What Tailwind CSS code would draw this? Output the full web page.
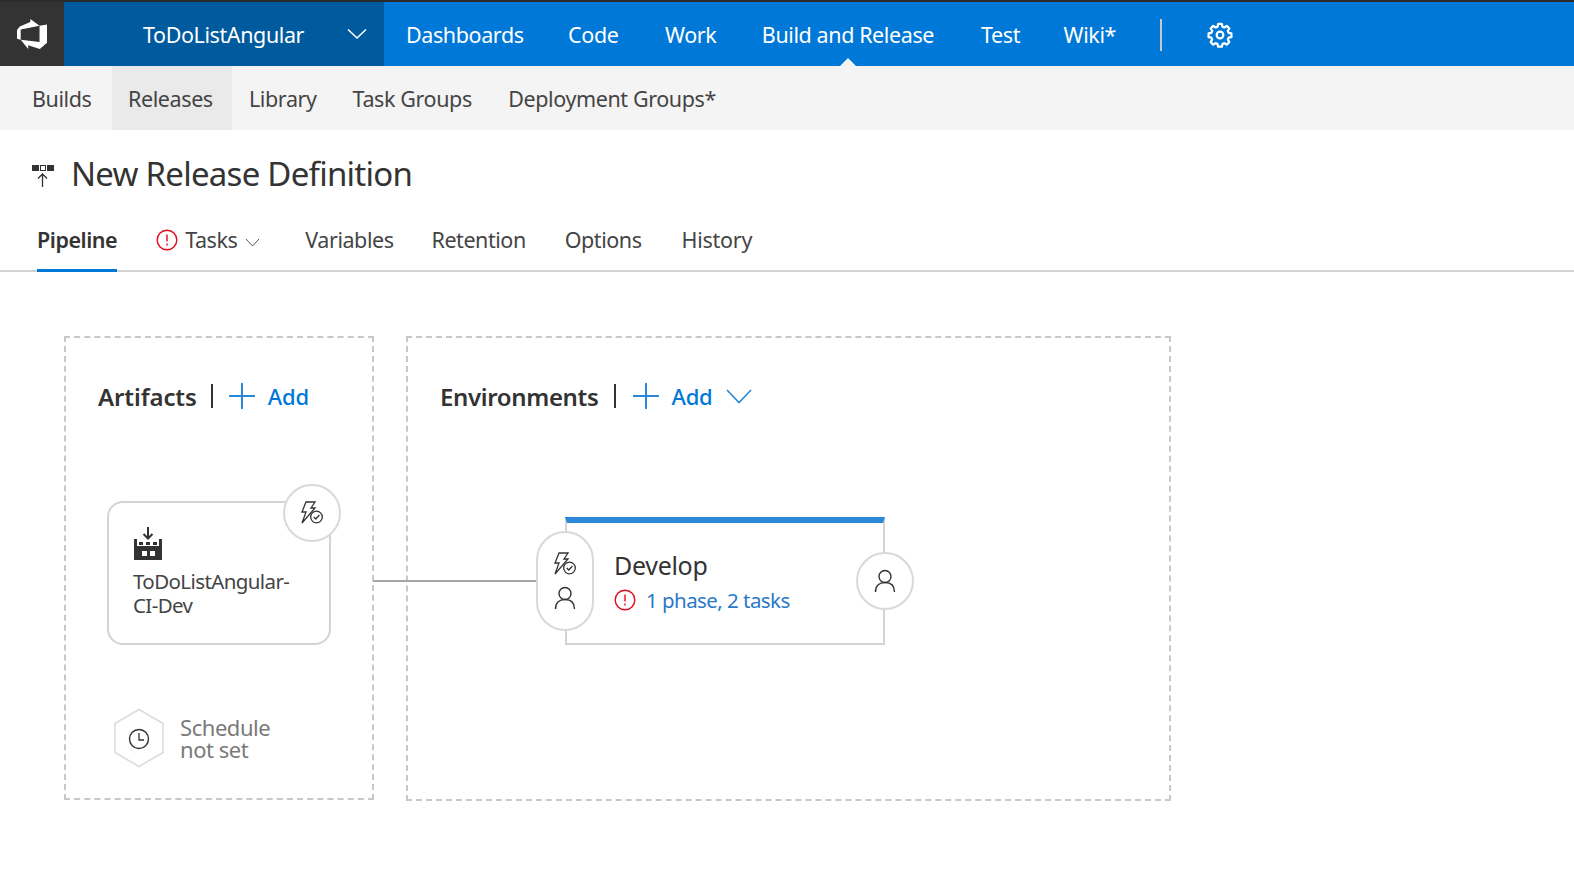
<!DOCTYPE html>
<html lang="en">

<head>
  <meta charset="UTF-8">
  <title>New Release Definition</title>
  <script src="https://cdn.jsdelivr.net/npm/@tailwindcss/browser@4"></script>
</head>

<body class="bg-white font-['Noto_Sans','Open_Sans',sans-serif] text-[#333] overflow-hidden">

  <!-- Top bar -->
  <header class="h-[66px] bg-[#0078d7] border-t-2 border-[#2b2b2b] flex text-white text-[21.5px] tracking-[-0.4px]">
    <div class="w-[64px] bg-[#333] flex items-center justify-center">
      <svg width="30" height="30" viewBox="0 0 24 24" fill="#fff">
        <path d="M0 8.877 2.247 5.91l8.405-3.416V.022l7.37 5.393L2.966 8.338v8.225L0 15.707zm24-4.45v14.651l-5.753 4.9-9.303-3.057v3.056l-5.978-7.416 15.057 1.798V5.415z"/>
      </svg>
    </div>
    <div class="w-[320px] bg-[#005a9e] flex items-center pl-[79px] pr-[17px] justify-between">
      <span class="pt-[2px]">ToDoListAngular</span>
      <svg width="20" height="12" viewBox="0 0 20 12" fill="none" stroke="#fff" stroke-width="1.6"><path d="M1 1.5 L10 10 L19 1.5"/></svg>
    </div>
    <nav class="flex items-center pl-[22px] pt-[2px]">
      <a class="mr-[44.5px]">Dashboards</a>
      <a class="mr-[46.5px]">Code</a>
      <a class="mr-[45.5px]">Work</a>
      <a class="mr-[47px] relative">Build and Release
        <span class="absolute left-1/2 -translate-x-1/2 bottom-[-17px] w-0 h-0 border-x-[10px] border-x-transparent border-b-[10px] border-b-[#f4f4f4]"></span>
      </a>
      <a class="mr-[43.5px]">Test</a>
      <a>Wiki*</a>
      <span class="w-[2px] h-[32px] bg-[#c8c8c8] ml-[44px]"></span>
      <svg class="ml-[45px]" width="26" height="26" viewBox="-2 -2 28 28" fill="none" stroke="#fff" stroke-width="2.4" stroke-linejoin="round">
        <circle cx="12" cy="12" r="3.6"/>
        <path d="M10 1.5h4l.6 3 2.1.9 2.6-1.7 2.8 2.8-1.7 2.6.9 2.1 3 .6v4l-3 .6-.9 2.1 1.7 2.6-2.8 2.8-2.6-1.7-2.1.9-.6 3h-4l-.6-3-2.1-.9-2.6 1.7-2.8-2.8 1.7-2.6-.9-2.1-3-.6v-4l3-.6.9-2.1-1.7-2.6 2.8-2.8 2.6 1.7 2.1-.9z" transform="translate(0 -1.5)"/>
      </svg>
    </nav>
  </header>

  <!-- Sub navigation -->
  <div class="h-[64px] bg-[#f4f4f4] flex text-[21.5px] tracking-[-0.4px] text-[#444]">
    <a class="w-[112px] pl-[32px] pt-[2px] flex items-center">Builds</a>
    <a class="w-[120px] pl-[16px] pt-[2px] bg-[#eaeaea] flex items-center">Releases</a>
    <a class="ml-[17px] pt-[2px] flex items-center">Library</a>
    <a class="ml-[36px] pt-[2px] flex items-center">Task Groups</a>
    <a class="ml-[36.5px] pt-[2px] flex items-center">Deployment Groups*</a>
  </div>

  <!-- Title -->
  <div class="h-[88px] flex items-center pl-[32px]">
    <svg width="23" height="26" viewBox="0 0 23 26" fill="#333">
      <rect x="0" y="4" width="7" height="6"/><rect x="8.5" y="4.5" width="5" height="5" fill="none" stroke="#333"/><rect x="15" y="4" width="7" height="6"/>
      <path d="M10.5 13 V26 M6 17.5 L10.5 13 L15 17.5" fill="none" stroke="#333" stroke-width="1.3"/>
    </svg>
    <h1 class="ml-[16px] text-[33px] tracking-[-0.75px] font-normal">New Release Definition</h1>
  </div>

  <!-- Tabs -->
  <div class="h-[54px] border-b-2 border-[#d4d4d4] flex pl-[37px] text-[21.5px] tracking-[-0.45px] text-[#444]">
    <a class="h-[54px] pb-[6px] border-b-[3px] border-[#0078d7] font-semibold text-[#333] flex items-center">Pipeline</a>
    <a class="ml-[39px] flex items-center h-[44px]">
      <svg width="22" height="22" viewBox="0 0 22 22" fill="none" stroke="#e00b1c" stroke-width="1.4">
        <circle cx="11" cy="11" r="9.8"/><path d="M11 5.5 V12.5 M11 14.5 V16.5"/>
      </svg>
      <span class="ml-[7px]">Tasks</span>
      <svg class="ml-[8px] mt-[4px]" width="15" height="9" viewBox="0 0 15 9" fill="none" stroke="#555" stroke-width="1"><path d="M1 1 L7.5 8 L14 1"/></svg>
    </a>
    <a class="ml-[45px] flex items-center h-[44px]">Variables</a>
    <a class="ml-[38px] flex items-center h-[44px]">Retention</a>
    <a class="ml-[39px] flex items-center h-[44px]">Options</a>
    <a class="ml-[40px] flex items-center h-[44px] tracking-[-0.25px]">History</a>
  </div>

  <!-- Pipeline canvas -->
  <main class="relative flex pl-[64px] pt-[64px] gap-[32px]">

    <!-- Artifacts -->
    <section class="relative w-[310px] h-[464px] border-2 border-dashed border-[#c8c8c8]">
      <div class="flex items-center pl-[32px] pt-[41px] h-[75px]">
        <h2 class="pt-[2px] text-[24px] font-semibold tracking-[-0.1px]">Artifacts</h2>
        <span class="ml-[14px] w-[2px] h-[24px] bg-[#333]"></span>
        <svg class="ml-[16px]" width="26" height="26" viewBox="0 0 26 26" stroke="#2b88d8" stroke-width="2"><path d="M0 13 H26 M13 0 V26"/></svg>
        <span class="ml-[13px] text-[22px] font-medium text-[#0078d7] tracking-[-0.2px]">Add</span>
      </div>

      <!-- Artifact card -->
      <div class="absolute left-[41px] top-[163px] w-[224px] h-[144px] border-2 border-[#d4d4d4] rounded-[16px] pl-[24px] pt-[24px] bg-white">
        <svg width="30" height="33" viewBox="0 0 30 33" fill="#333">
          <path d="M15 0 V11 M10.5 7 L15 11.5 L19.5 7" fill="none" stroke="#333" stroke-width="2"/>
          <path d="M1 12 h3 v7 h22 v-7 h3 v21 h-28 z"/>
          <rect x="6" y="15" width="4" height="3"/><rect x="13" y="15" width="4" height="3"/><rect x="20" y="15" width="4" height="3"/>
          <rect x="9" y="24" width="5" height="5" fill="#fff"/><rect x="17" y="24" width="5" height="5" fill="#fff"/>
        </svg>
        <p class="text-[20.5px] leading-[24px] tracking-[-0.6px] mt-[9px] text-[#444]">ToDoListAngular-<br>CI-Dev</p>
      </div>
      <!-- Trigger badge -->
      <div class="absolute left-[217px] top-[146px] w-[58px] h-[58px] rounded-full border-2 border-[#d9d9d9] bg-white flex items-center justify-center">
        <svg width="24" height="24" viewBox="0 0 24 24" fill="none" stroke="#333" stroke-width="1.3">
          <path d="M6 1 H15 L11 7 H15 L2 22 L6 11 H2 Z"/>
          <circle cx="16.5" cy="16" r="5.8" fill="#fff"/><path d="M13.8 16 L15.8 18 L19.4 14"/>
        </svg>
      </div>

      <!-- Schedule -->
      <div class="absolute left-[47px] top-[370px] flex items-center">
        <svg width="52" height="60" viewBox="0 0 52 60" fill="none">
          <path d="M26 1.5 L50 15.5 V44.5 L26 58.5 L2 44.5 V15.5 Z" stroke="#dcdcdc" stroke-width="1.6"/>
          <circle cx="26" cy="31" r="9.5" stroke="#333" stroke-width="1.4"/>
          <path d="M26 25 V32 H31" stroke="#333" stroke-width="1.3"/>
        </svg>
        <p class="ml-[15px] text-[22px] leading-[22px] tracking-[-0.45px] text-[#7a7a7a]">Schedule<br>not set</p>
      </div>
    </section>

    <!-- Environments -->
    <section class="relative w-[765px] h-[465px] border-2 border-dashed border-[#c8c8c8]">
      <div class="flex items-center pl-[32px] pt-[41px] h-[75px]">
        <h2 class="pt-[2px] text-[24px] font-semibold tracking-[-0.35px]">Environments</h2>
        <span class="ml-[16px] w-[2px] h-[24px] bg-[#333]"></span>
        <svg class="ml-[17px]" width="26" height="26" viewBox="0 0 26 26" stroke="#2b88d8" stroke-width="2"><path d="M0 13 H26 M13 0 V26"/></svg>
        <span class="ml-[12px] text-[22px] font-medium text-[#0078d7] tracking-[-0.2px]">Add</span>
        <svg class="ml-[13px]" width="26" height="15" viewBox="0 0 26 15" fill="none" stroke="#2b88d8" stroke-width="1.6"><path d="M1 1 L13 13.5 L25 1"/></svg>
      </div>

      <!-- Environment card -->
      <div class="absolute left-[157px] top-[179px] w-[320px] h-[128px] border-x-2 border-b-2 border-[#d4d4d4] border-t-[6px] border-t-[#2b88d8] pl-[47px] pt-[26px] bg-white">
        <p class="text-[25px] leading-[32px] tracking-[-0.3px]">Develop</p>
        <div class="flex items-center mt-[4px]">
          <svg width="22" height="22" viewBox="0 0 22 22" fill="none" stroke="#e00b1c" stroke-width="1.4">
            <circle cx="11" cy="11" r="9.8"/><path d="M11 5.5 V12.5 M11 14.5 V16.5"/>
          </svg>
          <span class="ml-[10px] text-[20.5px] tracking-[-0.55px] text-[#2b78c8]">1 phase, 2 tasks</span>
        </div>
      </div>

      <!-- Pre-deployment pill -->
      <div class="absolute left-[128px] top-[193px] w-[58px] h-[100px] rounded-full border-2 border-[#d9d9d9] bg-white flex flex-col items-center justify-center gap-[10px]">
        <svg width="24" height="24" viewBox="0 0 24 24" fill="none" stroke="#333" stroke-width="1.3">
          <path d="M6 1 H15 L11 7 H15 L2 22 L6 11 H2 Z"/>
          <circle cx="16.5" cy="16" r="5.8" fill="#fff"/><path d="M13.8 16 L15.8 18 L19.4 14"/>
        </svg>
        <svg width="22" height="24" viewBox="0 0 22 24" fill="none" stroke="#333" stroke-width="1.4">
          <circle cx="11" cy="7.5" r="6"/><path d="M1.5 23 C1.5 16.5 5.5 13.5 11 13.5 S20.5 16.5 20.5 23"/>
        </svg>
      </div>

      <!-- Post-deployment badge -->
      <div class="absolute left-[448px] top-[214px] w-[58px] h-[58px] rounded-full border-2 border-[#d9d9d9] bg-white flex items-center justify-center">
        <svg width="22" height="24" viewBox="0 0 22 24" fill="none" stroke="#333" stroke-width="1.4">
          <circle cx="11" cy="7.5" r="6"/><path d="M1.5 23 C1.5 16.5 5.5 13.5 11 13.5 S20.5 16.5 20.5 23"/>
        </svg>
      </div>
    </section>

    <!-- Connector -->
    <div class="absolute left-[373px] top-[308px] w-[163px] h-[2px] bg-[#a6a6a6]"></div>
  </main>

</body>

</html>
